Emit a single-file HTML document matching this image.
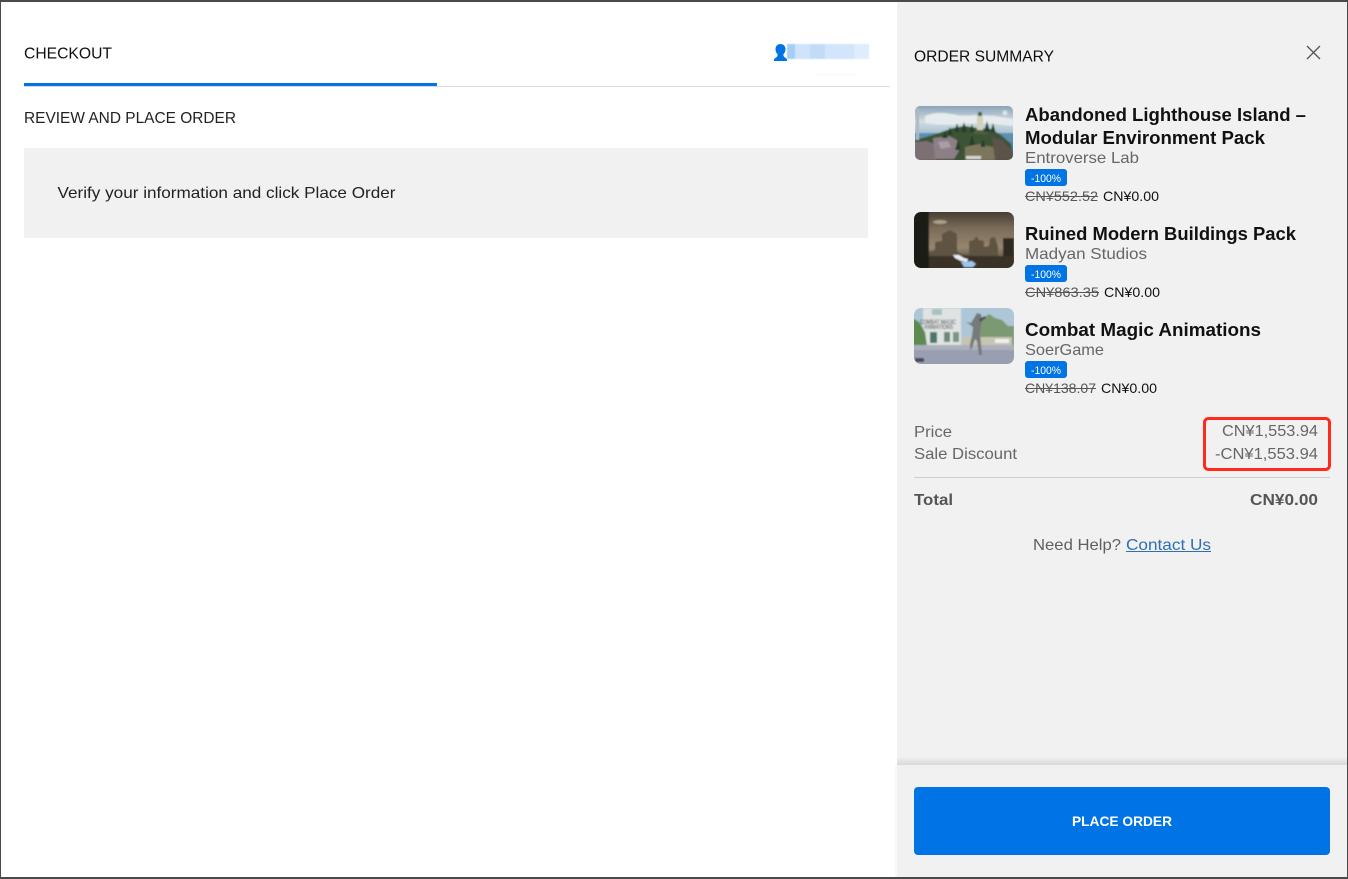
<!DOCTYPE html>
<html><head><meta charset="utf-8"><title>Checkout</title>
<style>
html,body{margin:0;padding:0;width:1348px;height:879px;overflow:hidden;background:#fff}
svg{display:block;position:absolute;left:0;top:0}
text{font-family:"Liberation Sans",sans-serif;font-size:16px}
.b{font-weight:700}
</style></head><body>
<svg width="1348" height="879" viewBox="0 0 1348 879" xmlns="http://www.w3.org/2000/svg">
<defs>
<filter id="bl" x="-5%" y="-5%" width="110%" height="110%"><feGaussianBlur stdDeviation="0.7"/></filter>
<filter id="bl2" x="-5%" y="-20%" width="110%" height="140%"><feGaussianBlur stdDeviation="0.6"/></filter>
<linearGradient id="sh" x1="0" y1="0" x2="0" y2="1"><stop offset="0" stop-color="#f1f1f1"/><stop offset="1" stop-color="#d8d8d8"/></linearGradient>
<linearGradient id="sky1" x1="0" y1="0" x2="0" y2="1"><stop offset="0" stop-color="#7f9cb2"/><stop offset=".3" stop-color="#d3dde2"/><stop offset=".5" stop-color="#a9c3d3"/><stop offset=".62" stop-color="#4f87ab"/></linearGradient>
<linearGradient id="sky2" x1="0" y1="0" x2="0" y2="1"><stop offset="0" stop-color="#3f372e"/><stop offset=".3" stop-color="#7a6b58"/><stop offset=".62" stop-color="#97866f"/><stop offset=".85" stop-color="#5a4e40"/><stop offset="1" stop-color="#2f2a24"/></linearGradient>
<clipPath id="c1"><rect x="915" y="106" width="98" height="54" rx="5"/></clipPath>
<clipPath id="c2"><rect x="914" y="212" width="100" height="56" rx="7"/></clipPath>
<clipPath id="c3"><rect x="914" y="308" width="100" height="56" rx="7"/></clipPath>
</defs>

<!-- panel -->
<rect x="897" y="0" width="451" height="879" fill="#f1f1f1"/>
<rect x="895" y="765" width="2" height="114" fill="#f8f8f8"/>
<rect x="897" y="757" width="450" height="8" fill="url(#sh)"/>

<!-- left -->
<rect x="24" y="86" width="866" height="1" fill="#d9d9d9"/>
<rect x="24" y="83" width="413" height="3" fill="#0074e4"/>
<rect x="24" y="148" width="844" height="90" fill="#f1f1f1"/>
<text x="24" y="58.500" textLength="88" lengthAdjust="spacingAndGlyphs" fill="#111">CHECKOUT</text>
<text x="24" y="123" textLength="212" lengthAdjust="spacingAndGlyphs" fill="#222">REVIEW AND PLACE ORDER</text>
<text x="57.500" y="198" textLength="338" lengthAdjust="spacingAndGlyphs" fill="#222">Verify your information and click Place Order</text>

<!-- user -->
<g filter="url(#bl2)">
<rect x="787" y="44" width="82" height="15" rx="2" fill="#d3e6fb"/>
<rect x="787" y="44" width="8" height="15" fill="#a6cdf6"/>
<rect x="795" y="44" width="15" height="15" fill="#cfe3fa"/>
<rect x="810" y="44" width="15" height="15" fill="#c2dcf8"/>
<rect x="825" y="44" width="29" height="15" fill="#d2e5fb"/>
<rect x="854" y="44" width="15" height="15" fill="#deecfc"/>
</g>
<rect x="816" y="74" width="42" height="1" fill="#f8f8f8"/>
<path d="M780.500 44c-3.200 0-5 2.300-5 5.300 0 2.300 1 3.900 2.100 5 .1 1.500-.3 2.300-1.400 3.100-.9.700-2.200 1.300-2.200 2.600v1h13v-1c0-1.300-1.300-1.900-2.200-2.600-1.100-.8-1.500-1.600-1.400-3.100 1.100-1.100 2.100-2.700 2.100-5 0-3-1.800-5.300-5-5.300z" fill="#0074e4"/>

<!-- order summary header -->
<text x="914" y="61.500" textLength="140" lengthAdjust="spacingAndGlyphs" fill="#0e0e0e">ORDER SUMMARY</text>
<path d="M1307 46l13 13M1320 46l-13 13" stroke="#555" stroke-width="1.300" fill="none"/>

<!-- thumb 1 -->
<g clip-path="url(#c1)"><g filter="url(#bl)">
<rect x="913" y="104" width="102" height="58" fill="url(#sky1)"/>
<path d="M925 116q12-5 26-2t24 1l20 1 18 3v7q-30-4-50-2t-38-1z" fill="#e6ebee"/>
<path d="M913 133h102v9h-102z" fill="#5b8fb0"/>
<path d="M915 140q12-3 24-7l14-5 12-2 12 2 14 1 10 6 10 9 4 18h-100z" fill="#3d5236"/>
<path d="M915 142l12-1 8 3 1 16h-21z" fill="#7d6f74"/>
<path d="M933 138l16-2 8 4 2 11-5 8h-19z" fill="#8c7f86"/>
<path d="M938 142l10-1 3 6-10 2z" fill="#a99ea6"/>
<path d="M965 147l14-3 14 3 6 13h-34z" fill="#7c775c"/>
<path d="M992 137l10 3 11 11v9h-18z" fill="#5b5249"/>
<path d="M976 129h10l3 5h-16z" fill="#4f5f44"/>
<rect x="977" y="115" width="6" height="15" fill="#d0d2bb"/>
<rect x="978" y="112" width="4" height="4" fill="#4d5f4e"/>
<path d="M957 123l2.500 9h-5zM964 122l3 10h-6zM972 124l2.500 8h-5zM987 121l3 11h-6zM993 123l2.500 9h-5zM950 127l3 8h-6zM945 131l3 7h-6zM972 135l3 10h-6zM958 140l3 10h-6zM983 139l2.500 8h-5z" fill="#22402a"/>
<rect x="966" y="156" width="15" height="3" fill="#d8d8d8"/>
<rect x="916" y="108" width="3" height="32" fill="#aeb9bf"/>
<circle cx="1005" cy="113" r="2.500" fill="#dfe3e6"/>
</g></g>

<!-- thumb 2 -->
<g clip-path="url(#c2)"><g filter="url(#bl)">
<rect x="912" y="210" width="104" height="60" fill="url(#sky2)"/>
<rect x="912" y="210" width="17" height="60" fill="#1e1a18"/>
<ellipse cx="940" cy="222" rx="7" ry="2" fill="#ab9c85"/>
<path d="M929 252l6-2v-8l7-1v-7l8-4 7 4v17l4 3 8 0v-13l5-1 2-4 3 4 5 1v6l5-1 1-8 5-1 3 10v12h-69z" fill="#5f5243"/>
<rect x="1003" y="238" width="11" height="30" fill="#2f2923"/>
<path d="M929 256h85v12h-85z" fill="#3a3028"/>
<path d="M953 255l6 0 5 3 4 1-1 3-6-1-6-3z" fill="#e8eef4"/>
<path d="M961 262l11-1 4 3-3 3-9 0z" fill="#9cc6ec"/>
</g></g>

<!-- thumb 3 -->
<g clip-path="url(#c3)"><g filter="url(#bl)">
<rect x="912" y="306" width="104" height="40" fill="#aec7d8"/>
<path d="M975 332l6-12 8-6 6 4 7 2 6 6 6 0v22h-39z" fill="#7b9a72"/>
<rect x="923" y="308" width="38" height="37" fill="#dfe3e2"/>
<rect x="932" y="309" width="10" height="6" fill="#a7c2c4"/>
<rect x="930" y="332" width="7" height="11" fill="#4f7568"/>
<rect x="944" y="332" width="6" height="10" fill="#6b8a7a"/>
<rect x="953" y="332" width="6" height="10" fill="#7a9586"/>
<path d="M912 318l7 4 6 10 2 14h-15z" fill="#5f8a4f"/>
<rect x="962" y="337" width="50" height="8" fill="#c8c4b2"/>
<rect x="995" y="339" width="14" height="4" fill="#eef0f0"/>
<rect x="912" y="350" width="104" height="16" fill="#999eb0"/>
<rect x="912" y="345" width="104" height="5" fill="#aab0bc"/>
<path d="M966 322l5 1 3-5 3-5 4 1 1 5-1 6-1 9 1 10 1 11h-3l-2-14-2-2-3 9-2 2 0-6 2-8 1-9-4-3z" fill="#767a7c"/>
<path d="M979 319l6-3 1 2-6 4z" fill="#4d5053"/>
<text x="920" y="324" style="font-size:6px" textLength="36" lengthAdjust="spacingAndGlyphs" fill="#2e2e2e">COMBAT MAGIC</text>
<text x="924" y="329" style="font-size:6px" textLength="29" lengthAdjust="spacingAndGlyphs" fill="#2e2e2e">ANIMATIONS</text>
<rect x="915" y="358" width="9" height="4" fill="#4a4c55"/>
</g></g>

<!-- item 1 -->
<text class="b" x="1025" y="121" style="font-size:18px" textLength="281" lengthAdjust="spacingAndGlyphs" fill="#111">Abandoned Lighthouse Island –</text>
<text class="b" x="1025" y="144" style="font-size:18px" textLength="240" lengthAdjust="spacingAndGlyphs" fill="#111">Modular Environment Pack</text>
<text x="1025" y="163" textLength="114" lengthAdjust="spacingAndGlyphs" fill="#666">Entroverse Lab</text>
<rect x="1025" y="169" width="42" height="17" rx="3" fill="#0074e4"/>
<text x="1031" y="182" style="font-size:11px" textLength="30" lengthAdjust="spacingAndGlyphs" fill="#fff">-100%</text>
<text x="1025" y="201" style="font-size:14px" textLength="73" lengthAdjust="spacingAndGlyphs" fill="#555">CN¥552.52</text>
<rect x="1025" y="196" width="73" height="1" fill="#555"/>
<text x="1103" y="201" style="font-size:14px" textLength="56" lengthAdjust="spacingAndGlyphs" fill="#111">CN¥0.00</text>

<!-- item 2 -->
<text class="b" x="1025" y="240" style="font-size:18px" textLength="271" lengthAdjust="spacingAndGlyphs" fill="#111">Ruined Modern Buildings Pack</text>
<text x="1025" y="259" textLength="122" lengthAdjust="spacingAndGlyphs" fill="#666">Madyan Studios</text>
<rect x="1025" y="265" width="42" height="17" rx="3" fill="#0074e4"/>
<text x="1031" y="278" style="font-size:11px" textLength="30" lengthAdjust="spacingAndGlyphs" fill="#fff">-100%</text>
<text x="1025" y="297" style="font-size:14px" textLength="74" lengthAdjust="spacingAndGlyphs" fill="#555">CN¥863.35</text>
<rect x="1025" y="292" width="74" height="1" fill="#555"/>
<text x="1104" y="297" style="font-size:14px" textLength="56" lengthAdjust="spacingAndGlyphs" fill="#111">CN¥0.00</text>

<!-- item 3 -->
<text class="b" x="1025" y="336" style="font-size:18px" textLength="236" lengthAdjust="spacingAndGlyphs" fill="#111">Combat Magic Animations</text>
<text x="1025" y="355" textLength="79" lengthAdjust="spacingAndGlyphs" fill="#666">SoerGame</text>
<rect x="1025" y="361" width="42" height="17" rx="3" fill="#0074e4"/>
<text x="1031" y="374" style="font-size:11px" textLength="30" lengthAdjust="spacingAndGlyphs" fill="#fff">-100%</text>
<text x="1025" y="393" style="font-size:14px" textLength="71" lengthAdjust="spacingAndGlyphs" fill="#555">CN¥138.07</text>
<rect x="1025" y="388" width="71" height="1" fill="#555"/>
<text x="1101" y="393" style="font-size:14px" textLength="56" lengthAdjust="spacingAndGlyphs" fill="#111">CN¥0.00</text>

<!-- totals -->
<text x="914" y="437" textLength="38" lengthAdjust="spacingAndGlyphs" fill="#666">Price</text>
<text x="1222" y="436" textLength="96" lengthAdjust="spacingAndGlyphs" fill="#666">CN¥1,553.94</text>
<text x="914" y="459" textLength="103" lengthAdjust="spacingAndGlyphs" fill="#666">Sale Discount</text>
<text x="1215" y="459" textLength="103" lengthAdjust="spacingAndGlyphs" fill="#666">-CN¥1,553.94</text>
<rect x="1204.500" y="418.500" width="125" height="51" rx="4" fill="none" stroke="#ff2a1c" stroke-width="3"/>
<rect x="914" y="477" width="416" height="1" fill="#cdcdcd"/>
<text class="b" x="914" y="505" textLength="39" lengthAdjust="spacingAndGlyphs" fill="#555">Total</text>
<text class="b" x="1250" y="505" textLength="68" lengthAdjust="spacingAndGlyphs" fill="#555">CN¥0.00</text>
<text x="1033" y="550" textLength="88" lengthAdjust="spacingAndGlyphs" fill="#5f5f5f">Need Help?</text>
<text x="1126" y="550" textLength="85" lengthAdjust="spacingAndGlyphs" fill="#2f6fb5">Contact Us</text>
<rect x="1126" y="551" width="85" height="1" fill="#2f6fb5"/>

<!-- button -->
<rect x="914" y="787" width="416" height="68" rx="4" fill="#0074e4"/>
<text class="b" x="1072" y="826" style="font-size:14px" textLength="100" lengthAdjust="spacingAndGlyphs" fill="#fff">PLACE ORDER</text>

<!-- window border -->
<rect x="0" y="0" width="1348" height="2" fill="#4a4a4a"/>
<rect x="0" y="877" width="1348" height="2" fill="#4a4a4a"/>
<rect x="0" y="0" width="1" height="879" fill="#4a4a4a"/>
<rect x="1347" y="0" width="1" height="879" fill="#4a4a4a"/>
</svg>
</body></html>
